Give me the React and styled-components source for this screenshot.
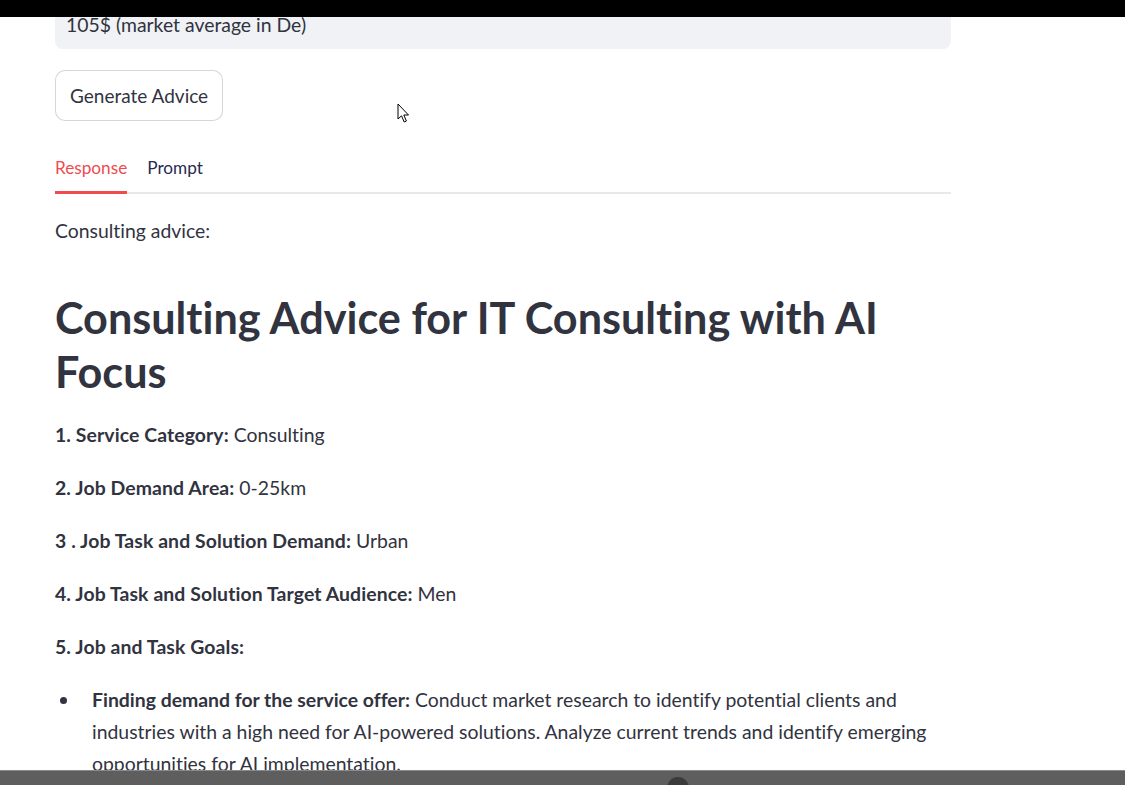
import styled, { createGlobalStyle } from "styled-components";

const Global = createGlobalStyle`
  html, body {
    margin: 0;
    background: #ffffff;
    overflow: hidden;
  }
  body {
    font-family: "Lato", "Noto Sans", sans-serif;
    font-size: 19.4px;
    line-height: 32px;
    color: #31333f;
    font-variant-ligatures: none;
  }
`;

const TopBar = styled.div`
  position: fixed;
  top: 0;
  left: 0;
  right: 0;
  height: 17px;
  background: #000000;
  z-index: 10;
`;

const BottomBar = styled.div`
  position: fixed;
  left: 0;
  right: 0;
  bottom: 0;
  height: 14px;
  background: #5e5e5e;
  border-top: 1px solid #8a8a8a;
  z-index: 10;
  overflow: hidden;
`;

const ScrollKnob = styled.div`
  position: absolute;
  left: 667px;
  top: 6px;
  width: 22px;
  height: 22px;
  border-radius: 50%;
  background: #3b3b3b;
`;

const Main = styled.main`
  width: 896px;
  padding: 1px 0 0 55px;
`;

const ValueBox = styled.div`
  background: #f0f2f6;
  border-radius: 8px;
  padding: 8px 11px;
`;

const Button = styled.button`
  margin-top: 21px;
  height: 51px;
  padding: 0 14px;
  border: 1px solid rgba(49, 51, 63, 0.2);
  border-radius: 10px;
  background: #ffffff;
  font: inherit;
  font-size: 19px;
  color: #31333f;
  cursor: pointer;
`;

const TabList = styled.div`
  margin-top: 20px;
  display: flex;
  gap: 20px;
  border-bottom: 2px solid #e6e8ec;
`;

const Tab = styled.div`
  height: 53px;
  display: flex;
  align-items: center;
  margin-bottom: -2px;
  border-bottom: 3px solid ${(p) => (p.$active ? "#ef4b4f" : "transparent")};
  color: ${(p) => (p.$active ? "#ef4b4f" : "#262b50")};
  font-size: 17.2px;
  box-sizing: border-box;
  padding-top: 3px;
`;

const Panel = styled.section`
  padding-top: 21px;
`;

const Para = styled.p`
  margin: 0 0 21px;
  & b {
    letter-spacing: 0.005em;
  }
`;

const Heading = styled.h2`
  margin: 43px 0 21px;
  font-size: 43.2px;
  line-height: 54px;
  font-weight: 700;
`;

const List = styled.ul`
  margin: 0;
  padding: 0;
  list-style: none;
`;

const Item = styled.li`
  display: grid;
  grid-template-columns: 37px 1fr;
`;

const Dot = styled.span`
  width: 7px;
  height: 7px;
  margin: 13px 0 0 5px;
  border-radius: 50%;
  background: #31333f;
`;

const Cursor = styled.svg`
  position: fixed;
  left: 397px;
  top: 103px;
  z-index: 5;
`;

export default function App() {
  return (
    <>
      <Global />
      <TopBar />
      <Main>
        <ValueBox>105$ (market average in De)</ValueBox>
        <Button>Generate Advice</Button>
        <TabList>
          <Tab $active>Response</Tab>
          <Tab>Prompt</Tab>
        </TabList>
        <Panel>
          <Para>Consulting advice:</Para>
          <Heading>Consulting Advice for IT Consulting with AI Focus</Heading>
          <Para>
            <b>1. Service Category:</b> Consulting
          </Para>
          <Para>
            <b>2. Job Demand Area:</b> 0-25km
          </Para>
          <Para>
            <b>3 . Job Task and Solution Demand:</b> Urban
          </Para>
          <Para>
            <b>4. Job Task and Solution Target Audience:</b> Men
          </Para>
          <Para>
            <b>5. Job and Task Goals:</b>
          </Para>
          <List>
            <Item>
              <Dot />
              <span>
                <b>Finding demand for the service offer:</b> Conduct market research to identify
                potential clients and industries with a high need for AI-powered solutions. Analyze
                current trends and identify emerging opportunities for AI implementation.
              </span>
            </Item>
          </List>
        </Panel>
      </Main>
      <Cursor width="13" height="21" viewBox="0 0 13 21">
        <path
          d="M1 1 L1 16 L4.5 12.8 L7.2 19 L9.4 18 L6.8 12 L11.5 12 Z"
          fill="#ffffff"
          stroke="#000000"
          strokeWidth="1"
          strokeLinejoin="round"
        />
      </Cursor>
      <BottomBar>
        <ScrollKnob />
      </BottomBar>
    </>
  );
}
